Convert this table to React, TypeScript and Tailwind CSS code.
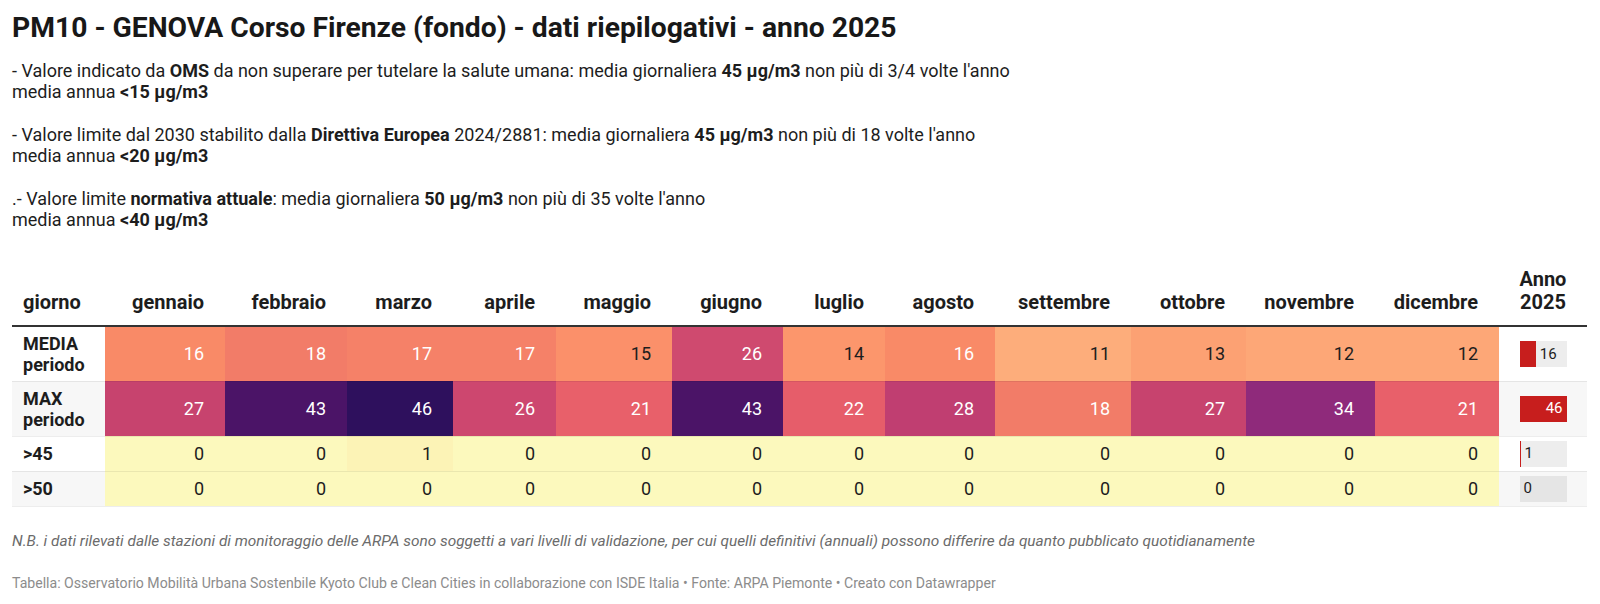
import React from 'react';

type Cell = { v: number; bg: string; light?: boolean };

const months = [
  'gennaio', 'febbraio', 'marzo', 'aprile', 'maggio', 'giugno',
  'luglio', 'agosto', 'settembre', 'ottobre', 'novembre', 'dicembre',
];

// larghezze colonne misurate sul riferimento
const colWidths = ['w-[93px]', 'w-[120px]', 'w-[122px]', 'w-[106px]', 'w-[103px]', 'w-[116px]', 'w-[111px]', 'w-[102px]', 'w-[110px]', 'w-[136px]', 'w-[115px]', 'w-[129px]', 'w-[124px]', 'w-[88px]'];

const Y = '#fcf9bd';

const rows: { label: string[]; tall: boolean; striped: boolean; cells: Cell[]; year: number }[] = [
  {
    label: ['MEDIA', 'periodo'],
    tall: true,
    striped: false,
    year: 16,
    cells: [
      { v: 16, bg: '#f98a67', light: true },
      { v: 18, bg: '#f27c68', light: true },
      { v: 17, bg: '#f58168', light: true },
      { v: 17, bg: '#f58168', light: true },
      { v: 15, bg: '#fb906a' },
      { v: 26, bg: '#cf4a6f', light: true },
      { v: 14, bg: '#fc966c' },
      { v: 16, bg: '#f98a67', light: true },
      { v: 11, bg: '#fdad7b' },
      { v: 13, bg: '#fca173' },
      { v: 12, bg: '#fda777' },
      { v: 12, bg: '#fda777' },
    ],
  },
  {
    label: ['MAX', 'periodo'],
    tall: true,
    striped: true,
    year: 46,
    cells: [
      { v: 27, bg: '#c7436e', light: true },
      { v: 43, bg: '#4b1467', light: true },
      { v: 46, bg: '#2e105d', light: true },
      { v: 26, bg: '#cd476f', light: true },
      { v: 21, bg: '#e8606a', light: true },
      { v: 43, bg: '#4b1467', light: true },
      { v: 22, bg: '#e65d6a', light: true },
      { v: 28, bg: '#c03e71', light: true },
      { v: 18, bg: '#f27c68', light: true },
      { v: 27, bg: '#c7436e', light: true },
      { v: 34, bg: '#8f2a7b', light: true },
      { v: 21, bg: '#e8606a', light: true },
    ],
  },
  {
    label: ['>45'],
    tall: false,
    striped: false,
    year: 1,
    cells: [0, 0, 1, 0, 0, 0, 0, 0, 0, 0, 0, 0].map((v) => ({ v, bg: v === 1 ? '#fcf3b6' : Y })),
  },
  {
    label: ['>50'],
    tall: false,
    striped: true,
    year: 0,
    cells: [0, 0, 0, 0, 0, 0, 0, 0, 0, 0, 0, 0].map((v) => ({ v, bg: Y })),
  },
];

const YearBar = ({ value, max }: { value: number; max: number }) => {
  const full = value === max;
  return (
    <div className="relative mx-auto flex h-[26px] w-[47px] items-center bg-black/[0.07] text-[15px]">
      <div className="h-full bg-[#c71e1d]" style={{ width: `${(value / max) * 47}px` }} />
      {full ? (
        <span className="absolute right-[4px] text-white">{value}</span>
      ) : (
        <span className="ml-[4px] text-[#1d1d1d]">{value}</span>
      )}
    </div>
  );
};

export default function App() {
  return (
    <div className="w-[1600px] bg-white px-[12px] pt-[12px] text-[#1d1d1d]" style={{ fontFamily: 'Roboto, "Noto Sans", sans-serif' }}>
      <h1 className="text-[28.25px] font-bold leading-[32px] text-[#181818]">
        PM10 - GENOVA Corso Firenze (fondo) - dati riepilogativi - anno 2025
      </h1>

      <div className="mt-[16px] text-[18px] leading-[21px]">
        <p>
          - Valore indicato da <b>OMS</b> da non superare per tutelare la salute umana: media giornaliera <b>45 µg/m3</b> non più di 3/4 volte l'anno
          <br />
          media annua <b>&lt;15 µg/m3</b>
        </p>
        <p className="mt-[22px]">
          - Valore limite dal 2030 stabilito dalla <b>Direttiva Europea</b> 2024/2881: media giornaliera <b>45 µg/m3</b> non più di 18 volte l'anno
          <br />
          media annua <b>&lt;20 µg/m3</b>
        </p>
        <p className="mt-[22px]">
          .- Valore limite <b>normativa attuale</b>: media giornaliera <b>50 µg/m3</b> non più di 35 volte l'anno
          <br />
          media annua <b>&lt;40 µg/m3</b>
        </p>
      </div>

      <table className="mt-[38px] w-[1575px] table-fixed border-collapse text-[18px]">
        <colgroup>
          {colWidths.map((w, i) => (
            <col key={i} className={w} />
          ))}
        </colgroup>
        <thead>
          <tr className="border-b-2 border-[#333333] text-[20px]">
            <th className="pb-[11px] pl-[11px] text-left align-bottom font-bold leading-[23px]">giorno</th>
            {months.map((m) => (
              <th key={m} className="pb-[11px] pr-[21px] text-right align-bottom font-bold leading-[23px]">
                {m}
              </th>
            ))}
            <th className="pb-[11px] text-center align-bottom font-bold leading-[23px]">
              Anno
              <br />
              2025
            </th>
          </tr>
        </thead>
        <tbody>
          {rows.map((row, ri) => (
            <tr key={ri} className={`border-b border-black/[0.07] ${row.tall ? 'h-[55px]' : 'h-[35px]'}`}>
              <td className={`pl-[11px] font-bold leading-[21px] ${row.striped ? 'bg-[#f7f7f7]' : 'bg-white'}`}>
                {row.label.map((l, i) => (
                  <div key={i}>{l}</div>
                ))}
              </td>
              {row.cells.map((c, ci) => (
                <td
                  key={ci}
                  className={`pr-[21px] text-right ${c.light ? 'text-white' : 'text-[#1d1d1d]'}`}
                  style={{ backgroundColor: c.bg }}
                >
                  {c.v}
                </td>
              ))}
              <td className={row.striped ? 'bg-[#f7f7f7]' : 'bg-white'}>
                <YearBar value={row.year} max={46} />
              </td>
            </tr>
          ))}
        </tbody>
      </table>

      <p className="mt-[24px] text-[15.4px] italic leading-[20px] text-[#6b6b6b]">
        N.B. i dati rilevati dalle stazioni di monitoraggio delle ARPA sono soggetti a vari livelli di validazione, per cui quelli definitivi (annuali) possono differire da quanto pubblicato quotidianamente
      </p>
      <p className="mt-[23px] pb-[14px] text-[14.1px] leading-[18px] text-[#8c8c8c]">
        Tabella: Osservatorio Mobilità Urbana Sostenbile Kyoto Club e Clean Cities in collaborazione con ISDE Italia • Fonte: ARPA Piemonte • Creato con Datawrapper
      </p>
    </div>
  );
}
